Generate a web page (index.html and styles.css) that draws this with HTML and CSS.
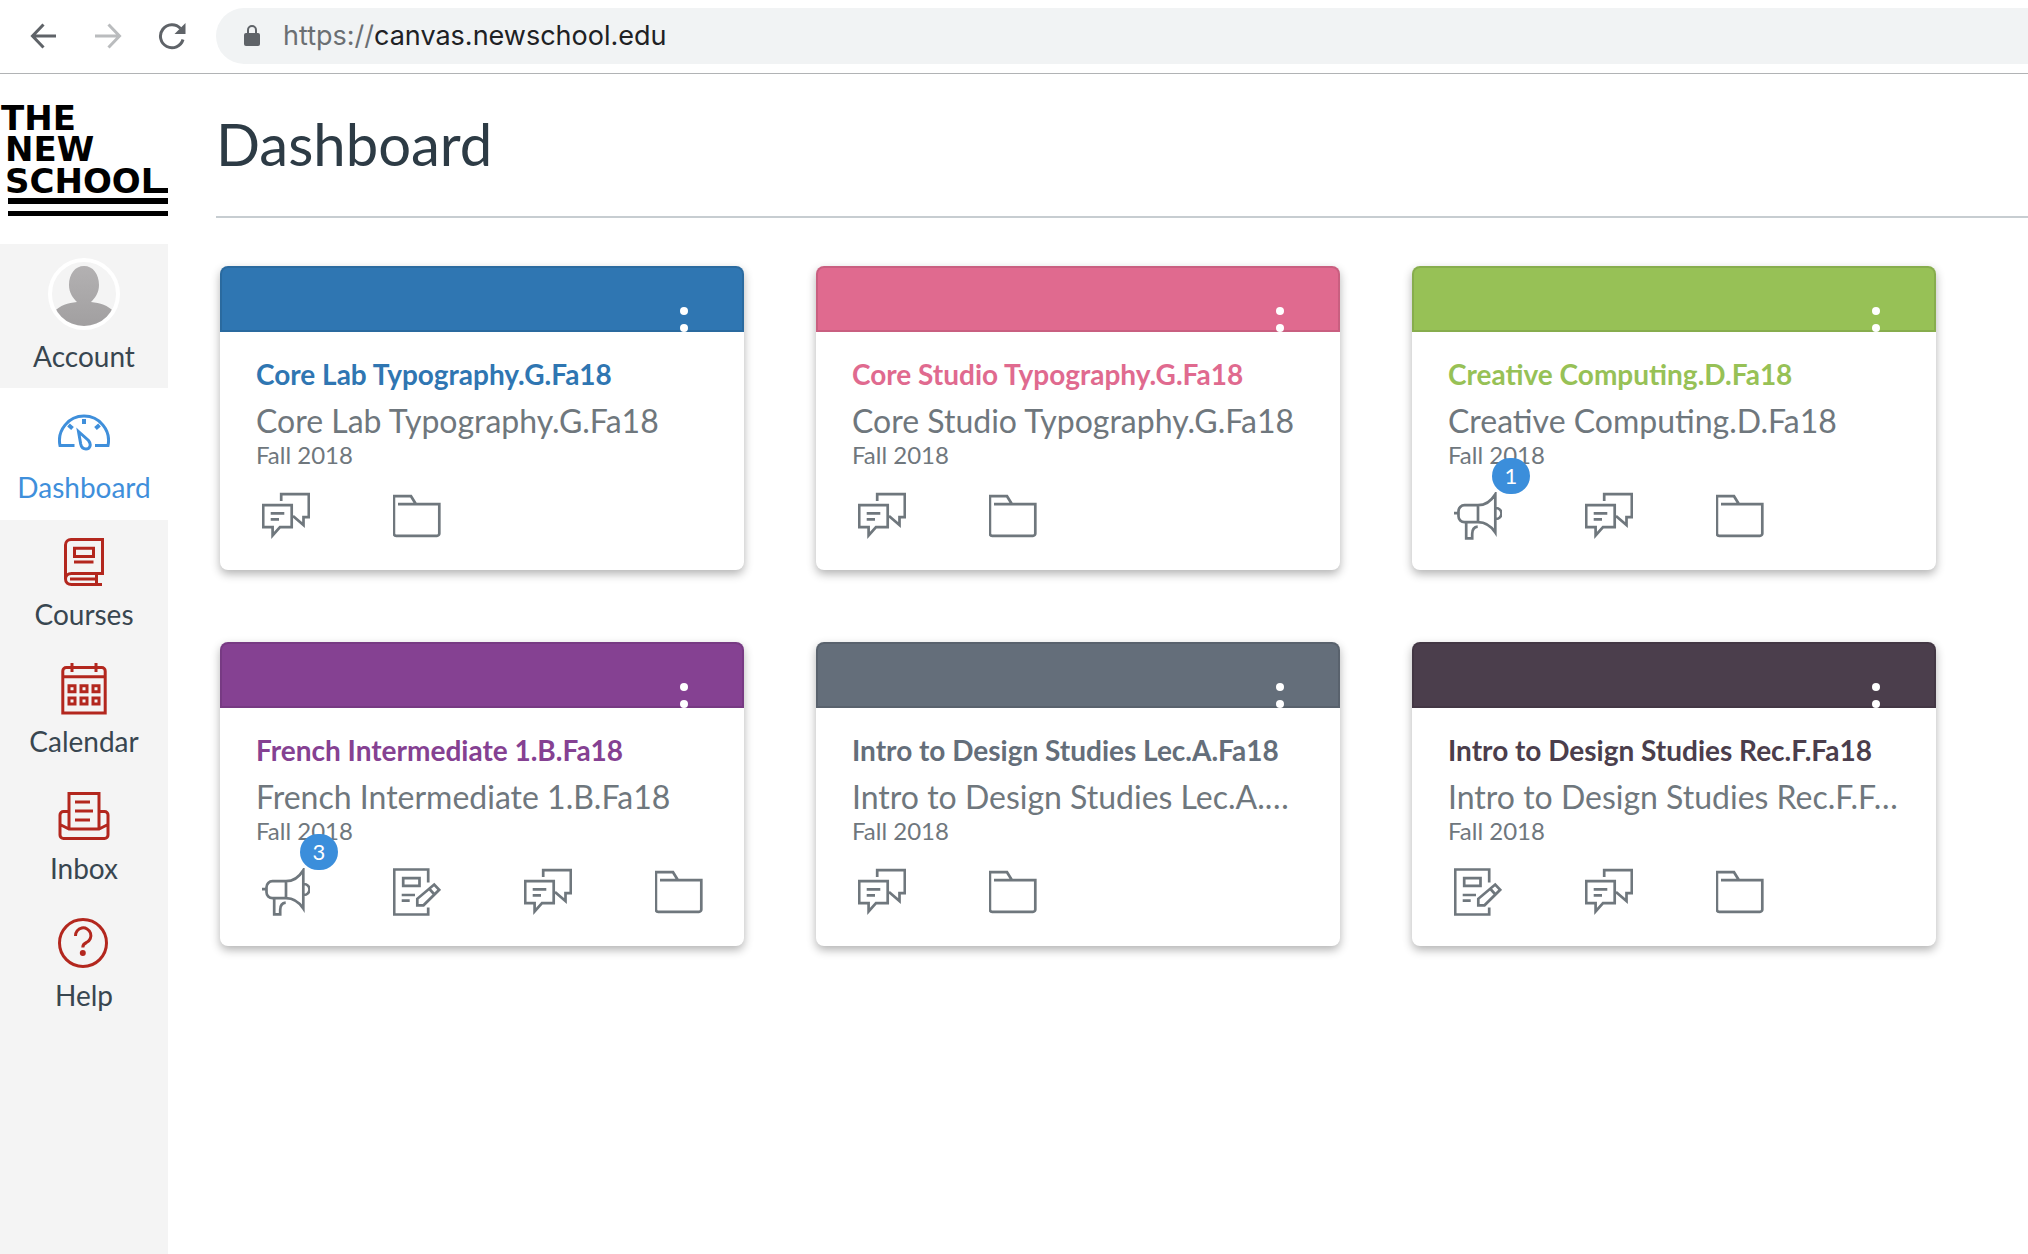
FILE: index.html
```html
<!DOCTYPE html>
<html lang="en">
<head>
<meta charset="utf-8">
<meta name="viewport" content="width=device-width, initial-scale=1">
<title>Dashboard</title>
<link rel="stylesheet" href="styles.css">
</head>
<body>
<svg class="sprite" aria-hidden="true">
  <symbol id="i-discussion" viewBox="0 0 48 48"><path d="M1.2 13.2H29.7V35.2H18L10.6 43.5V35.2H1.2ZM19.2 9V2.2H46.8V25.2H41.5V33L31 24M8.7 21.3H22.3M8.7 27.3H17"/></symbol>
  <symbol id="i-folder" viewBox="0 0 48 48"><path d="M5 12.2H46.3V41.5a2.3 2.3 0 0 1-2.3 2.3H3.2a2.3 2.3 0 0 1-2.3-2.3V4.200H18L23 12.2"/></symbol>
  <symbol id="i-announce" viewBox="0 0 48 48"><path d="M24 13.2H10.5a6 6 0 0 0-6 6v5a6 6 0 0 0 6 6H24ZM24 13.2c8 0 13-4 17.3-11V40.5c-4.3-6.5-9.3-10.3-17.3-10.3M0 21.2h4.5M42 16a5.3 5.3 0 0 1 0 11M12.2 30.2V46.3h6V42c0-4.5 2-7 5.5-7.3"/></symbol>
  <symbol id="i-assignment" viewBox="0 0 48 48"><path d="M35.2 14.5V1.5H1.2V46.5H35.2V39.5M10.2 10.2H26.5V17.8H10.2ZM8.7 27H22M8.7 32.7H16.7M24.3 37.3v-6.5L41.2 16.5l5 5.3L30.5 37.3ZM36 20.5l5 5.5"/></symbol>
</svg>

<header class="browser">
  <button class="tool" aria-label="Back"><svg viewBox="0 0 28 28"><path d="M26 14H3M13.5 2.5L2.5 14L13.5 25.5"/></svg></button>
  <button class="tool tool-off" aria-label="Forward"><svg viewBox="0 0 28 28"><path d="M1 14H25M14.5 2.5L25.5 14L14.5 25.5"/></svg></button>
  <button class="tool" aria-label="Reload"><svg viewBox="0 0 28 28"><path d="M25 17.5A11.5 11.5 0 1 1 22.5 6.5"/><path class="solid" d="M27.5 1V12H16.5Z"/></svg></button>
  <div class="address">
    <svg class="lock" viewBox="0 0 18 24"><path class="solid" d="M3 9H15a2 2 0 0 1 2 2V20a2 2 0 0 1-2 2H3a2 2 0 0 1-2-2V11a2 2 0 0 1 2-2Z"/><path d="M5 10V6a4 4 0 0 1 8 0V10"/></svg>
    <span class="url"><span class="scheme">https://</span>canvas.newschool.edu</span>
  </div>
</header>

<div class="app">
  <nav class="side" aria-label="Main">
    <a class="logo" href="#" aria-label="The New School">
      <svg viewBox="0 0 168 114">
        <text x="1" y="26">THE</text>
        <text x="5" y="57">NEW</text>
        <text x="5" y="89">SCHOOL</text>
        <rect x="150" y="84" width="18" height="5"/>
        <rect x="8" y="94" width="160" height="6"/>
        <rect x="8" y="107" width="160" height="5"/>
      </svg>
    </a>
    <a class="item account" href="#">
      <svg class="avatar" viewBox="0 0 72 72">
        <defs>
          <linearGradient id="shade" x1="0" y1="0" x2="0" y2="1"><stop offset="0" stop-color="#b3b1b2"/><stop offset="1" stop-color="#a09e9f"/></linearGradient>
          <clipPath id="round"><circle cx="36" cy="36" r="32"/></clipPath>
        </defs>
        <circle cx="36" cy="36" r="34" fill="#f4f4f4" stroke="#fff" stroke-width="4"/>
        <path clip-path="url(#round)" fill="url(#shade)" d="M36 8C45 8 51 16 51 27C51 35 47 40 43 44C52 45 60 47 66 54V72H6V54C12 47 20 45 29 44C25 40 21 35 21 27C21 16 27 8 36 8Z"/>
      </svg>
      <span>Account</span>
    </a>
    <a class="item active" href="#" aria-current="page">
      <svg viewBox="0 0 52 52"><path d="M16.5 39.5H2A24.5 24.5 0 1 1 50 39.5H37M20.5 25.5L30.5 34.5C34 39 31.5 43 28 43C24.5 43 23.3 41 22.7 38Z"/><path class="tick" d="M26 13v5M10.5 19l4 3.5M41.5 19l-4 3.5"/></svg>
      <span>Dashboard</span>
    </a>
    <a class="item" href="#">
      <svg viewBox="0 0 52 52"><path d="M46 37.5H44.500V3.5H13A5.5 5.5 0 0 0 7.5 9V43c0-3.5 2.5-5.5 6-5.5H46M7.5 43c0 3.5 2.5 5.5 6 5.5H44M12 43H38.5M38.5 37.5V48.5M16.5 12.2H35.5V20.5H16.5ZM16 26H35.5"/></svg>
      <span>Courses</span>
    </a>
    <a class="item" href="#">
      <svg viewBox="0 0 52 52"><path d="M4.8 50V8a3.5 3.5 0 0 1 3.5-3.5H43.7A3.5 3.5 0 0 1 47.2 8V50ZM4.8 13.7H47.2M14 0V9M38 0V9M11 22.8h6v6h-6ZM23 22.8h6v6h-6ZM35 22.8h6v6h-6ZM11 35h6v6h-6ZM23 35h6v6h-6ZM35 35h6v6h-6Z"/></svg>
      <span>Calendar</span>
    </a>
    <a class="item" href="#">
      <svg viewBox="0 0 52 52"><path d="M11 39V3.5H41V39M11 21.5H5.5A3.5 3.5 0 0 0 2 25V45a3.5 3.5 0 0 0 3.5 3.5H46.5A3.5 3.5 0 0 0 50 45V25a3.5 3.5 0 0 0-3.5-3.5H41M2 34.5L11 39H41L50 34.5M17 12H32M17 21H35M17 30H32"/></svg>
      <span>Inbox</span>
    </a>
    <a class="item" href="#">
      <svg viewBox="0 0 52 52"><circle cx="25" cy="26" r="23.5"/><path d="M17.5 19a7.7 7.7 0 1 1 11 6.5c-3 1.3-3.7 2.5-3.7 5"/><circle class="solid" cx="24.8" cy="36" r="3"/></svg>
      <span>Help</span>
    </a>
  </nav>

  <main class="main">
    <h1>Dashboard</h1>
    <div class="cards">
      <article class="card blue">
        <div class="band"><button class="more" aria-label="Card options"><svg viewBox="0 0 10 44"><circle cx="5" cy="5" r="4"/><circle cx="5" cy="22" r="4"/><circle cx="5" cy="39" r="4"/></svg></button></div>
        <div class="body">
          <h2><a href="#">Core Lab Typography.G.Fa18</a></h2>
          <p class="code">Core Lab Typography.G.Fa18</p>
          <p class="term">Fall 2018</p>
          <div class="actions">
            <a href="#" aria-label="Discussions"><svg><use href="#i-discussion"/></svg></a>
            <a href="#" aria-label="Files"><svg><use href="#i-folder"/></svg></a>
          </div>
        </div>
      </article>
      <article class="card pink">
        <div class="band"><button class="more" aria-label="Card options"><svg viewBox="0 0 10 44"><circle cx="5" cy="5" r="4"/><circle cx="5" cy="22" r="4"/><circle cx="5" cy="39" r="4"/></svg></button></div>
        <div class="body">
          <h2><a href="#">Core Studio Typography.G.Fa18</a></h2>
          <p class="code">Core Studio Typography.G.Fa18</p>
          <p class="term">Fall 2018</p>
          <div class="actions">
            <a href="#" aria-label="Discussions"><svg><use href="#i-discussion"/></svg></a>
            <a href="#" aria-label="Files"><svg><use href="#i-folder"/></svg></a>
          </div>
        </div>
      </article>
      <article class="card green">
        <div class="band"><button class="more" aria-label="Card options"><svg viewBox="0 0 10 44"><circle cx="5" cy="5" r="4"/><circle cx="5" cy="22" r="4"/><circle cx="5" cy="39" r="4"/></svg></button></div>
        <div class="body">
          <h2><a href="#">Creative Computing.D.Fa18</a></h2>
          <p class="code">Creative Computing.D.Fa18</p>
          <p class="term">Fall 2018</p>
          <div class="actions">
            <a href="#" aria-label="Announcements"><svg><use href="#i-announce"/></svg><span class="badge">1</span></a>
            <a href="#" aria-label="Discussions"><svg><use href="#i-discussion"/></svg></a>
            <a href="#" aria-label="Files"><svg><use href="#i-folder"/></svg></a>
          </div>
        </div>
      </article>
      <article class="card purple">
        <div class="band"><button class="more" aria-label="Card options"><svg viewBox="0 0 10 44"><circle cx="5" cy="5" r="4"/><circle cx="5" cy="22" r="4"/><circle cx="5" cy="39" r="4"/></svg></button></div>
        <div class="body">
          <h2><a href="#">French Intermediate 1.B.Fa18</a></h2>
          <p class="code">French Intermediate 1.B.Fa18</p>
          <p class="term">Fall 2018</p>
          <div class="actions">
            <a href="#" aria-label="Announcements"><svg><use href="#i-announce"/></svg><span class="badge">3</span></a>
            <a href="#" aria-label="Assignments"><svg><use href="#i-assignment"/></svg></a>
            <a href="#" aria-label="Discussions"><svg><use href="#i-discussion"/></svg></a>
            <a href="#" aria-label="Files"><svg><use href="#i-folder"/></svg></a>
          </div>
        </div>
      </article>
      <article class="card slate">
        <div class="band"><button class="more" aria-label="Card options"><svg viewBox="0 0 10 44"><circle cx="5" cy="5" r="4"/><circle cx="5" cy="22" r="4"/><circle cx="5" cy="39" r="4"/></svg></button></div>
        <div class="body">
          <h2><a href="#">Intro to Design Studies Lec.A.Fa18</a></h2>
          <p class="code">Intro to Design Studies Lec.A.Fa18</p>
          <p class="term">Fall 2018</p>
          <div class="actions">
            <a href="#" aria-label="Discussions"><svg><use href="#i-discussion"/></svg></a>
            <a href="#" aria-label="Files"><svg><use href="#i-folder"/></svg></a>
          </div>
        </div>
      </article>
      <article class="card plum">
        <div class="band"><button class="more" aria-label="Card options"><svg viewBox="0 0 10 44"><circle cx="5" cy="5" r="4"/><circle cx="5" cy="22" r="4"/><circle cx="5" cy="39" r="4"/></svg></button></div>
        <div class="body">
          <h2><a href="#">Intro to Design Studies Rec.F.Fa18</a></h2>
          <p class="code">Intro to Design Studies Rec.F.Fa18</p>
          <p class="term">Fall 2018</p>
          <div class="actions">
            <a href="#" aria-label="Assignments"><svg><use href="#i-assignment"/></svg></a>
            <a href="#" aria-label="Discussions"><svg><use href="#i-discussion"/></svg></a>
            <a href="#" aria-label="Files"><svg><use href="#i-folder"/></svg></a>
          </div>
        </div>
      </article>
    </div>
  </main>
</div>
</body>
</html>
```

FILE: styles.css
```css
* { box-sizing: border-box; }

body {
  margin: 0;
  min-height: 100vh;
  display: flex;
  flex-direction: column;
  background: #fff;
  color: #2d3b45;
  font-family: Lato, sans-serif;
}

h1, h2, p { margin: 0; font-weight: 400; }
a { color: inherit; text-decoration: none; }
button { border: 0; padding: 0; background: none; cursor: pointer; }
svg { display: block; }
.sprite { display: none; }

/* Browser toolbar */
.browser {
  display: flex;
  align-items: center;
  gap: 36px;
  height: 74px;
  padding: 0 0 1px 30px;
  border-bottom: 1px solid #b1b3b5;
}
.tool svg { width: 28px; height: 28px; fill: none; stroke: #5f6368; stroke-width: 3; }
.tool-off svg { stroke: #babcbe; }
.tool .solid { fill: #5f6368; stroke: none; }
.address {
  flex: 1;
  display: flex;
  align-items: center;
  gap: 22px;
  height: 56px;
  margin-left: -6px;
  padding-left: 27px;
  border-radius: 28px 0 0 28px;
  background: #f1f3f4;
}
.lock { width: 18px; height: 24px; fill: none; stroke: #5f6368; stroke-width: 2; }
.lock .solid { fill: #5f6368; stroke: none; }
.url { font: 27px/36px Inter, sans-serif; color: #202124; }
.scheme { color: #6b6f73; }

.app { flex: 1; display: flex; }

/* Side navigation */
.side { flex: none; width: 168px; background: #f4f4f4; }
.logo { display: block; height: 170px; padding-top: 30px; background: #fff; }
.logo svg { width: 168px; height: 114px; fill: #000; }
.logo text { font: 700 34px "DejaVu Sans", sans-serif; }
.item {
  display: flex;
  flex-direction: column;
  align-items: center;
  gap: 9px;
  padding: 16px 0;
  color: #384650;
  font-size: 28px;
  line-height: 34px;
}
.item svg { width: 52px; height: 52px; fill: none; stroke: #b3271e; stroke-width: 3; }
.item .solid { fill: #b3271e; stroke: none; }
.item .avatar { width: 72px; height: 72px; stroke: none; }
.account { padding: 14px 0 15px; }
.active { gap: 12px; padding: 18px 0 16px; background: #fff; color: #3f8fdb; }
.active svg { stroke: #3f8fdb; }
.active .tick { stroke-width: 4; }

/* Dashboard */
.main { flex: 1; min-width: 0; padding: 32px 0 60px 48px; }
h1 {
  padding: 4px 0 38px;
  border-bottom: 2px solid #c7cdd1;
  font-size: 58px;
  line-height: 68px;
}
.cards {
  display: grid;
  grid-template-columns: repeat(auto-fill, 524px);
  gap: 72px;
  padding: 48px 4px;
}
.card {
  border-radius: 8px;
  background: #fff;
  box-shadow: 0 4px 10px rgba(0, 0, 0, .3);
}
.band {
  display: flex;
  align-items: flex-start;
  justify-content: flex-end;
  height: 66px;
  padding: 40px 55px 0 0;
  overflow: hidden;
  border-radius: 8px 8px 0 0;
  background: currentColor;
  box-shadow: inset 0 0 0 2px rgba(0, 0, 0, .1);
}
.more svg { width: 10px; height: 44px; fill: #fff; }
.body { padding: 24px 36px 30px; }
h2 { font-size: 28px; font-weight: 700; line-height: 36px; }
.code {
  margin-top: 9px;
  overflow: hidden;
  text-overflow: ellipsis;
  white-space: nowrap;
  color: #6f777d;
  font-size: 32px;
  line-height: 40px;
}
.term { color: #6f777d; font-size: 24px; line-height: 28px; }
.actions { display: flex; gap: 83px; padding: 23px 6px 0; }
.actions a { position: relative; }
.actions svg { width: 48px; height: 48px; fill: none; stroke: #6f777d; stroke-width: 2.7; }
.badge {
  position: absolute;
  top: -34px;
  left: 38px;
  width: 38px;
  height: 36px;
  border-radius: 18px;
  background: #3b8edb;
  color: #fff;
  font-size: 22px;
  line-height: 36px;
  text-align: center;
}

.blue { color: #2f76b2; }
.pink { color: #e06a8f; }
.green { color: #97c156; }
.purple { color: #854192; }
.slate { color: #646e7a; }
.plum { color: #4b3e4c; }
```
